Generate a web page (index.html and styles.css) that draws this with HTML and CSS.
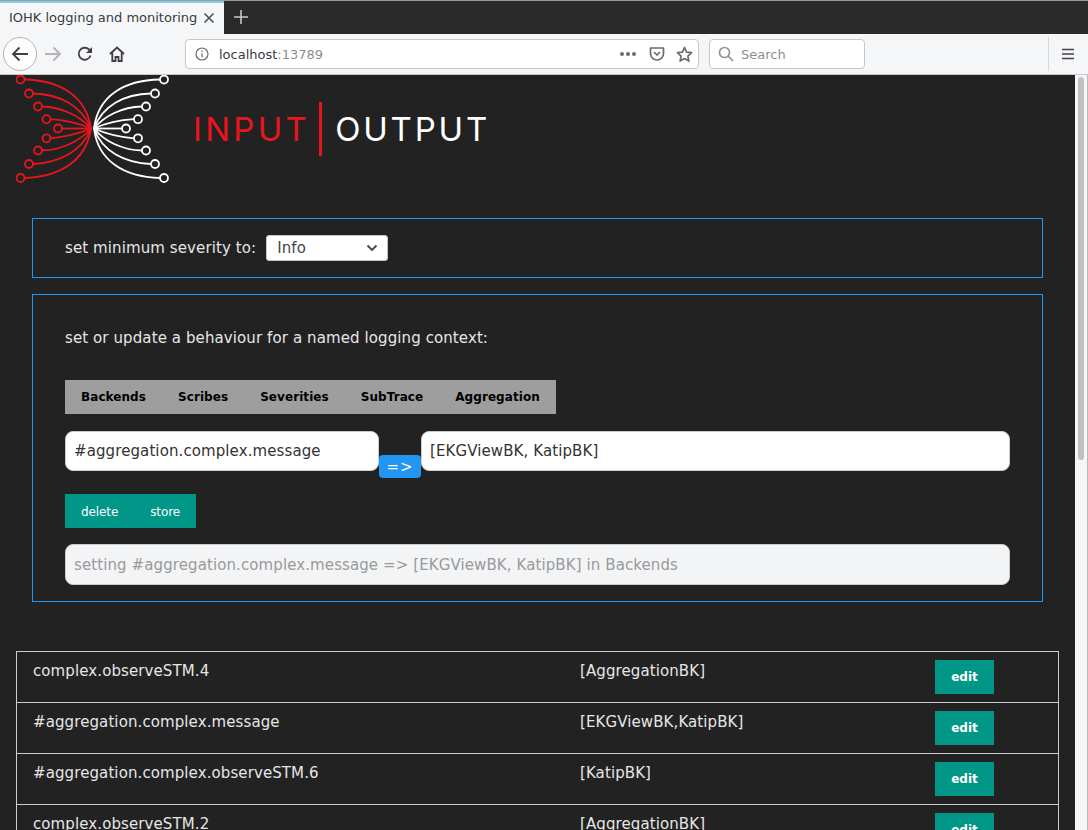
FILE: index.html
```html
<!DOCTYPE html>
<html lang="en">
<head>
  <meta charset="UTF-8" />
  <meta name="viewport" content="width=device-width, initial-scale=1.0" />
  <title>IOHK logging and monitoring</title>
  <link rel="stylesheet" href="styles.css">
</head>
<body>
  <div class="tabbar">
    <div class="tab">
      <span class="tab-title">IOHK logging and monitoring</span>
      <svg class="tab-close" width="12" height="12" viewBox="0 0 12 12"><path d="M1.500 1.500l9 9M10.500 1.500l-9 9" /></svg>
    </div>
    <svg class="new-tab" width="16" height="16" viewBox="0 0 16 16"><path d="M8 1v14M1 8h14" /></svg>
  </div>

  <div class="toolbar">
    <div class="back-btn">
      <svg width="18" height="16" viewBox="0 0 18 16"><path d="M17 8H2M8.500 1.500L2 8l6.500 6.500" /></svg>
    </div>
    <svg class="nav-icon forward" width="18" height="16" viewBox="0 0 18 16"><path d="M1 8h15M9.500 1.500L16 8l-6.500 6.500" /></svg>
    <svg class="nav-icon reload" width="16" height="16" viewBox="0 0 16 16"><path d="M13.500 9.500A6 6 0 1 1 12 3.500L14 5.500" /><path class="fill" d="M15 1v6H9z" /></svg>
    <svg class="nav-icon home" width="16" height="16" viewBox="0 0 16 16"><path d="M1 8l7-6.500L15 8M3.300 6.500V15h3.200v-4h3v4h3.200V6.500" /></svg>

    <div class="urlbar">
      <svg class="info" width="14" height="14" viewBox="0 0 14 14"><circle cx="7" cy="7" r="6" /><path d="M7 6.200v4M7 3.500v1.400" /></svg>
      <span class="url">localhost<span class="url-port">:13789</span></span>
      <span class="url-dots"><i></i><i></i><i></i></span>
      <svg class="pocket" width="16" height="16" viewBox="0 0 16 16"><path d="M1.500 2h13v5.500a6.500 6.500 0 0 1-13 0zM5 6l3 3 3-3" /></svg>
      <svg class="star" width="17" height="17" viewBox="0 0 17 17"><path d="M8.500 1.500l2.100 4.600 5 .6-3.700 3.400 1 5-4.400-2.500-4.400 2.500 1-5L1.400 6.700l5-.6z" /></svg>
    </div>
    <div class="searchbar">
      <svg width="16" height="16" viewBox="0 0 16 16"><circle cx="6.500" cy="6.500" r="5" /><path d="M10.200 10.200L15 15" /></svg>
      <span>Search</span>
    </div>
    <div class="toolbar-sep"></div>
    <svg class="hamburger" width="12" height="12" viewBox="0 0 12 12"><path d="M0 1.500h12M0 6h12M0 10.500h12" /></svg>
  </div>

  <div class="viewport">
    <main class="page">
      <div class="logo">
        <svg class="logo-mark" width="156" height="112" viewBox="16 74 156 112">
          <g class="red">
            <path d="M24 79.500C60 80 86 96 91 128.500" />
            <path d="M32.500 93.500C60 94 82 106 91 128.500" />
            <path d="M41.500 106.500C62 107 80 116 91 128.500" />
            <path d="M50 119.200C64 120 78 123 91 128.500" />
            <path d="M61.500 128.500H91" />
            <path d="M50 138.300C64 137 78 134 91 128.500" />
            <path d="M41.500 150.500C62 150 80 141 91 128.500" />
            <path d="M32.500 164C60 163 82 151 91 128.500" />
            <path d="M24 178C60 177 86 161 91 128.500" />
            <circle cx="20.500" cy="79.500" r="4" />
            <circle cx="29" cy="93.500" r="4" />
            <circle cx="38" cy="106.500" r="4" />
            <circle cx="46.500" cy="119.200" r="4" />
            <circle cx="58" cy="128.500" r="4" />
            <circle cx="46.500" cy="138.300" r="4" />
            <circle cx="38" cy="150.500" r="4" />
            <circle cx="29" cy="164" r="4" />
            <circle cx="20.500" cy="178" r="4" />
          </g>
          <g class="white">
            <path d="M160 79.500C124 80 98 96 94 128.500" />
            <path d="M151 93.500C124 94 102 106 94 128.500" />
            <path d="M142 106.500C122 107 104 116 94 128.500" />
            <path d="M134 119.200C120 120 106 123 94 128.500" />
            <path d="M122 128.500H94" />
            <path d="M134 138.300C120 137 106 134 94 128.500" />
            <path d="M142 150.500C122 150 104 141 94 128.500" />
            <path d="M151 164C124 163 102 151 94 128.500" />
            <path d="M160 178C124 177 98 161 94 128.500" />
            <circle cx="164" cy="79.500" r="4" />
            <circle cx="155" cy="93.500" r="4" />
            <circle cx="146" cy="106.500" r="4" />
            <circle cx="138" cy="119.200" r="4" />
            <circle cx="126" cy="128.500" r="4" />
            <circle cx="138" cy="138.300" r="4" />
            <circle cx="146" cy="150.500" r="4" />
            <circle cx="155" cy="164" r="4" />
            <circle cx="164" cy="178" r="4" />
          </g>
        </svg>
        <div class="wordmark">
          <span class="word-input">INPUT</span>
          <span class="word-bar"></span>
          <span class="word-output">OUTPUT</span>
        </div>
      </div>

      <section class="panel panel-severity">
        <label class="panel-label" for="severity">set minimum severity to:</label>
        <div class="select" id="severity">
          <span>Info</span>
          <svg width="12" height="8" viewBox="0 0 12 8"><path d="M1.500 1.500L6 6l4.500-4.500" /></svg>
        </div>
      </section>

      <section class="panel panel-behaviour">
        <p class="panel-label">set or update a behaviour for a named logging context:</p>
        <div class="tabs">
          <a>Backends</a>
          <a>Scribes</a>
          <a>Severities</a>
          <a>SubTrace</a>
          <a>Aggregation</a>
        </div>
        <div class="mapping">
          <input class="field field-key" value="#aggregation.complex.message">
          <button class="arrow-btn">=&gt;</button>
          <input class="field field-value" value="[EKGViewBK, KatipBK]">
        </div>
        <div class="actions">
          <button>delete</button>
          <button>store</button>
        </div>
        <input class="field field-status" disabled value="setting #aggregation.complex.message =&gt; [EKGViewBK, KatipBK] in Backends">
      </section>

      <div class="entries">
        <div class="entry">
          <span>complex.observeSTM.4</span>
          <span>[AggregationBK]</span>
          <span><button class="edit-btn">edit</button></span>
        </div>
        <div class="entry">
          <span>#aggregation.complex.message</span>
          <span>[EKGViewBK,KatipBK]</span>
          <span><button class="edit-btn">edit</button></span>
        </div>
        <div class="entry">
          <span>#aggregation.complex.observeSTM.6</span>
          <span>[KatipBK]</span>
          <span><button class="edit-btn">edit</button></span>
        </div>
        <div class="entry">
          <span>complex.observeSTM.2</span>
          <span>[AggregationBK]</span>
          <span><button class="edit-btn">edit</button></span>
        </div>
      </div>
    </main>
    <div class="scrollbar"><div class="scroll-thumb"></div></div>
  </div>
</body>
</html>
```

FILE: styles.css
```css
* {
  box-sizing: border-box;
  margin: 0;
  padding: 0;
}

html,
body {
  height: 100%;
  overflow: hidden;
}

body {
  font-family: "DejaVu Sans", sans-serif;
  font-size: 15px;
  letter-spacing: 0.1px;
  background-color: #222;
  color: #e6e6e6;
  display: flex;
  flex-direction: column;
}

svg {
  display: block;
  flex: none;
  fill: none;
}

/* browser chrome */
.tabbar {
  height: 34px;
  flex: none;
  display: flex;
  align-items: stretch;
  background-color: #2b2a2b;
  border-top: 1px solid #9a9a9a;
}

.tab {
  width: 224px;
  display: flex;
  align-items: center;
  justify-content: space-between;
  padding: 0 9px 2px 9px;
  background-color: #f5f6f8;
  border-top: 2px solid #7fd0ee;
  color: #3a3a3d;
  font-size: 13px;
  letter-spacing: 0;
  white-space: nowrap;
}

.tab-close path {
  stroke: #4a4a4f;
  stroke-width: 1.5;
}

.new-tab {
  margin: 8px 0 0 9px;
}

.new-tab path {
  stroke: #c8c8c8;
  stroke-width: 1.6;
}

.toolbar {
  height: 41px;
  flex: none;
  display: flex;
  align-items: center;
  background-color: #f5f6f8;
  border-bottom: 1px solid #c8c8cc;
  padding-left: 3px;
}

.back-btn {
  width: 34px;
  height: 34px;
  border: 1px solid #b4b4b8;
  border-radius: 50%;
  background-color: #fdfdfd;
  display: flex;
  align-items: center;
  justify-content: center;
}

.back-btn path,
.nav-icon path {
  stroke: #3f3f43;
  stroke-width: 1.8;
}

.nav-icon path.fill {
  fill: #3f3f43;
  stroke: none;
}

.forward {
  margin-left: 7px;
}

.nav-icon.forward path {
  stroke: #b3b3b6;
}

.reload {
  margin-left: 15px;
}

.home {
  margin-left: 16px;
}

.urlbar {
  width: 514px;
  height: 30px;
  margin-left: 60px;
  display: flex;
  align-items: center;
  background-color: #fff;
  border: 1px solid #c6c7cc;
  border-radius: 4px;
  padding: 0 5px 0 9px;
  font-size: 13px;
  letter-spacing: 0;
}

.info circle,
.info path {
  stroke: #68686c;
  stroke-width: 1.2;
}

.url {
  margin-left: 10px;
  color: #3a3a3d;
  flex: 1;
}

.url-port {
  color: #8d8d91;
}

.url-dots {
  display: flex;
  gap: 2px;
  margin-right: 3px;
}

.url-dots i {
  width: 4px;
  height: 4px;
  border-radius: 50%;
  background-color: #6b6b6f;
}

.pocket {
  margin-left: 10px;
}

.pocket path,
.star path {
  stroke: #6b6b6f;
  stroke-width: 1.7;
  stroke-linejoin: round;
}

.star {
  margin-left: 11px;
}

.searchbar {
  width: 156px;
  height: 30px;
  margin-left: 10px;
  display: flex;
  align-items: center;
  gap: 7px;
  background-color: #fff;
  border: 1px solid #c6c7cc;
  border-radius: 4px;
  padding-left: 8px;
  color: #8d8d91;
  font-size: 13px;
  letter-spacing: 0;
}

.searchbar circle,
.searchbar path {
  stroke: #939397;
  stroke-width: 1.7;
}

.toolbar-sep {
  width: 1px;
  height: 34px;
  margin-left: 183px;
  background-color: #d8d8dc;
}

.hamburger {
  margin-left: 13px;
}

.hamburger path {
  stroke: #444448;
  stroke-width: 1.6;
}

/* page */
.viewport {
  flex: 1;
  min-height: 0;
  display: flex;
}

.page {
  flex: 1;
  min-width: 0;
  overflow: hidden;
  padding: 0 16px;
}

.scrollbar {
  width: 13px;
  flex: none;
  padding: 2px 3px 0 3px;
  background-color: #f5f6f8;
  border-right: 1px solid #b9b9b9;
}

.scroll-thumb {
  width: 6px;
  height: 383px;
  border-radius: 3px;
  background-color: #c1c1c1;
}

.logo {
  height: 143px;
  display: flex;
  align-items: flex-start;
}

.logo-mark {
  margin-top: -1px;
}

.logo-mark path,
.logo-mark circle {
  stroke-width: 1.8;
}

.logo-mark .red path,
.logo-mark .red circle {
  stroke: #e8151f;
}

.logo-mark .white path,
.logo-mark .white circle {
  stroke: #fff;
}

.wordmark {
  display: flex;
  align-items: center;
  height: 56px;
  margin: 26px 0 0 21px;
  font-family: "Inter", sans-serif;
  font-size: 33px;
  font-weight: 400;
  line-height: 1;
  letter-spacing: 3.300px;
}

.word-input {
  color: #e8151f;
}

.word-bar {
  width: 3px;
  height: 54px;
  margin: 0 13px 0 9px;
  background-color: #e8151f;
}

.word-output {
  color: #fff;
  letter-spacing: 2.800px;
}

.panel {
  margin: 0 16px 16px;
  border: 1px solid #2196f3;
  padding: 0 32px;
}

.panel-label {
  color: #e6e6e6;
}

.panel-severity {
  height: 60px;
  display: flex;
  align-items: center;
  gap: 10px;
}

.select {
  width: 122px;
  height: 26px;
  display: flex;
  align-items: center;
  justify-content: space-between;
  padding: 0 9px 0 10px;
  background-color: #fff;
  border: 1px solid #c6c7cc;
  border-radius: 3px;
  color: #444;
}

.select path {
  stroke: #444;
  stroke-width: 1.8;
}

.panel-behaviour {
  height: 308px;
  padding-top: 34px;
}

.tabs {
  display: inline-flex;
  height: 34px;
  margin-top: 33px;
  background-color: #9e9e9e;
  color: #000;
  font-size: 12px;
  font-weight: bold;
  letter-spacing: 0.07px;
  line-height: 34px;
}

.tabs a {
  padding: 0 16px;
}

.mapping {
  display: flex;
  align-items: flex-start;
  margin-top: 17px;
}

.field {
  height: 40px;
  padding: 0 8px;
  font-family: inherit;
  font-size: 15px;
  letter-spacing: 0.1px;
  color: #333;
  background-color: #fff;
  border: 1px solid #ccc;
  border-radius: 8px;
}

.field-key {
  width: 314px;
}

.field-value {
  flex: 1;
  min-width: 0;
}

.arrow-btn {
  width: 42px;
  height: 23px;
  margin-top: 24px;
  border: none;
  border-radius: 4px;
  background-color: #2196f3;
  color: #fff;
  font-family: inherit;
  font-size: 15px;
  letter-spacing: 1px;
}

.actions {
  display: flex;
  margin-top: 16px;
}

.actions button {
  height: 34px;
  padding: 1px 16px 0;
  border: none;
  background-color: #009688;
  color: #fff;
  font-family: inherit;
  font-size: 12px;
  letter-spacing: -0.1px;
}

.field-status {
  display: block;
  width: 100%;
  margin-top: 16px;
  height: 41px;
  background-color: #f3f4f6;
  color: #9a9a9a;
}

.entries {
  margin-top: 49px;
  border: 1px solid #ccc;
  border-bottom: none;
}

.entry {
  height: 51px;
  display: grid;
  grid-template-columns: 547px 355px 1fr;
  padding-top: 8px;
  border-bottom: 1px solid #ccc;
  line-height: 22px;
}

.entry > span {
  padding-left: 16px;
}

.edit-btn {
  display: block;
  width: 59px;
  height: 34px;
  border: none;
  background-color: #009688;
  color: #fff;
  font-family: inherit;
  font-size: 12px;
  font-weight: bold;
}
```
